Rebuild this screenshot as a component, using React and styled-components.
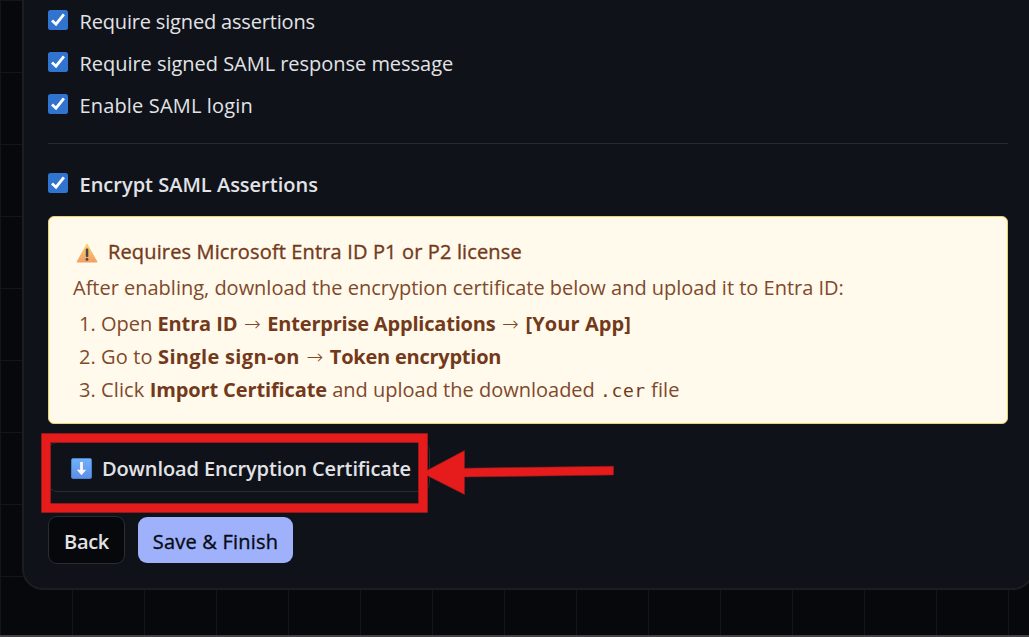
import { styled, createGlobalStyle } from "styled-components";

const options = [
  { label: "Require signed assertions", tracking: -0.17 },
  { label: "Require signed SAML response message", tracking: -0.03 },
  { label: "Enable SAML login", tracking: 0.16 },
];

export default function App() {
  return (
    <>
      <GlobalStyle />
      <PageStyled>
        <PanelStyled>
          <OptionList>
            {options.map(({ label, tracking }) => (
              <CheckboxRow key={label} label={label} tracking={tracking} />
            ))}
          </OptionList>
          <Divider />
          <CheckboxRow label="Encrypt SAML Assertions" tracking={0} isBold />
          <LicenseNotice />
          <DownloadRow>
            <DownloadButton>
              <DownloadIcon />
              <Run $tracking={-0.1}>Download Encryption Certificate</Run>
            </DownloadButton>
            <Highlight />
          </DownloadRow>
          <Actions>
            <BackButton>
              <Run $tracking={-0.3}>Back</Run>
            </BackButton>
            <SaveButton>
              <Run $tracking={0.2}>Save &amp; Finish</Run>
            </SaveButton>
          </Actions>
        </PanelStyled>
      </PageStyled>
    </>
  );
}

function CheckboxRow({ label, tracking, isBold }) {
  return (
    <CheckboxRowStyled $isBold={isBold}>
      <span className="box">
        <svg width="20" height="20" viewBox="0 0 20 20">
          <path d="M4 10.4 L8 14.2 L15.9 4.4" fill="none" stroke="#fff" strokeWidth="2.8" />
        </svg>
      </span>
      <Run $tracking={tracking}>{label}</Run>
    </CheckboxRowStyled>
  );
}

function LicenseNotice() {
  return (
    <NoticeStyled>
      <div className="title">
        <WarningIcon />
        <Run $tracking={0.14}>Requires Microsoft Entra ID P1 or P2 license</Run>
      </div>
      <p>
        <Run $tracking={-0.01}>
          After enabling, download the encryption certificate below and upload it to Entra ID:
        </Run>
      </p>
      <ol>
        <li>
          <Run $tracking={0}>Open </Run>
          <Strong $tracking={-0.12}>Entra ID</Strong>
          <Arrow>→</Arrow>
          <Strong $tracking={-0.2}>Enterprise Applications</Strong>
          <Arrow>→</Arrow>
          <Strong $tracking={0.1}>[Your App]</Strong>
        </li>
        <li>
          <Run $tracking={0.16}>Go to </Run>
          <Strong $tracking={0.33}>Single sign-on</Strong>
          <Arrow>→</Arrow>
          <Strong $tracking={-0.24}>Token encryption</Strong>
        </li>
        <li>
          <Run $tracking={0.12}>Click </Run>
          <Strong $tracking={-0.12}>Import Certificate</Strong>
          <Run $tracking={0}> and upload the downloaded </Run>
          <code>.cer</code>
          <Run $tracking={0.1}> file</Run>
        </li>
      </ol>
    </NoticeStyled>
  );
}

function WarningIcon() {
  return (
    <svg width="22" height="20" viewBox="0 0 22 20">
      <defs>
        <linearGradient id="warning" x1="0" y1="0" x2="0" y2="1">
          <stop offset="0" stopColor="#fad36b" />
          <stop offset="1" stopColor="#f2a065" />
        </linearGradient>
      </defs>
      <path d="M11 1 L21 19 H1 Z" fill="url(#warning)" stroke="url(#warning)" strokeLinejoin="round" />
      <rect x="9.8" y="5.5" width="2.5" height="8.6" rx="1" fill="#4a4550" />
      <circle cx="11" cy="16.4" r="1.4" fill="#4a4550" />
    </svg>
  );
}

function DownloadIcon() {
  return (
    <svg width="21" height="21" viewBox="0 0 21 21">
      <defs>
        <linearGradient id="download" x1="0" y1="0" x2="0" y2="1">
          <stop offset="0" stopColor="#72b2f7" />
          <stop offset="1" stopColor="#5c8ee6" />
        </linearGradient>
      </defs>
      <rect x="0.5" y="0.5" width="20" height="20" rx="1.5" fill="url(#download)" stroke="#4a80d4" />
      <path d="M9.1 4 h2.8 v7.8 h3.3 L10.5 17.2 L5.8 11.8 H9.1 Z" fill="#faf5ff" />
    </svg>
  );
}

function Highlight() {
  return (
    <HighlightStyled width="576" height="80" viewBox="0 0 576 80">
      <g fill="none">
        <rect x="5" y="5" width="377" height="70" stroke="#8c191d" strokeWidth="9.6" />
        <rect x="5" y="5" width="377" height="70" stroke="#e61c1c" strokeWidth="8.6" />
      </g>
      <path
        d="M383 39 L423.5 17.5 V35.2 L572.5 33.2 V42 L423.5 44 V61.5 L383 41 Z"
        fill="#e61c1c"
        stroke="#8c191d"
        strokeWidth="0.6"
      />
      <rect x="378" y="36" width="8" height="10" fill="#e61c1c" />
    </HighlightStyled>
  );
}

const GlobalStyle = createGlobalStyle`
  * {
    box-sizing: border-box;
  }

  body {
    margin: 0;
    overflow: hidden;
    background: #07080b;
    font-family: "Open Sans", "Noto Sans", sans-serif;
    font-size: 20px;
  }
`;

const PageStyled = styled.div`
  width: 1029px;
  height: 637px;
  overflow: hidden;
  padding-left: 22px;
  border-bottom: 2px solid #434345;
  background-color: #07080b;
  background-image: linear-gradient(to right, #14151a 1px, transparent 1px),
    linear-gradient(to bottom, #14151a 1px, transparent 1px);
  background-size: 72px 72px;
`;

const PanelStyled = styled.main`
  width: 1012px;
  height: 590px;
  padding: 0 24px;
  border: 2px solid #1b1d21;
  border-top: none;
  border-radius: 0 0 21px 21px;
  background: #0f1219;
  color: #e2e3e6;
`;

const OptionList = styled.div`
  display: flex;
  flex-direction: column;
  gap: 12px;
  padding-top: 5px;
`;

const CheckboxRowStyled = styled.label`
  display: flex;
  gap: 11.5px;
  height: 30px;
  line-height: 34px;
  font-weight: ${({ $isBold }) => ($isBold ? 600 : 400)};

  .box {
    width: 20px;
    height: 20px;
    margin-top: 5px;
    border-radius: 2.5px;
    background: #3174d0;
  }

  svg {
    display: block;
  }
`;

const Divider = styled.hr`
  height: 1px;
  margin: 24px 0;
  border: none;
  background: #272a30;
`;

const Run = styled.span`
  letter-spacing: ${({ $tracking }) => $tracking}px;
  white-space: pre;
`;

const Strong = styled(Run).attrs({ as: "strong" })`
  font-weight: 700;
`;

const NoticeStyled = styled.section`
  height: 208px;
  margin-top: 18px;
  padding: 17px 24px;
  border: 1px solid #f0d264;
  border-radius: 6px;
  background: #fffaeb;
  color: #7f492c;

  .title {
    display: flex;
    align-items: center;
    gap: 10px;
    height: 34px;
    padding-left: 3px;
    color: #73391b;
    -webkit-text-stroke: 0.35px #73391b;
  }

  .title svg {
    margin-top: 3px;
  }

  p {
    height: 39px;
    margin: 0;
    line-height: 40px;
  }

  ol {
    margin: 0;
    padding-left: 28px;
  }

  li {
    height: 33px;
    line-height: 33px;
    white-space: nowrap;
  }

  strong,
  code {
    color: #73391b;
  }

  code {
    font-family: "DejaVu Sans Mono", monospace;
    font-size: 18px;
    letter-spacing: 0.6px;
  }
`;

const Arrow = styled.span`
  display: inline-block;
  width: 30px;
  line-height: 20px;
  text-align: center;
  font-family: "DejaVu Sans", sans-serif;
  font-weight: 200;
  font-size: 20px;
`;

const DownloadRow = styled.div`
  position: relative;
  margin-top: 18px;
`;

const ButtonStyled = styled.button`
  display: flex;
  align-items: center;
  justify-content: center;
  height: 48px;
  padding: 0;
  border: 1px solid #292c33;
  border-radius: 9px;
  background: transparent;
  color: #e2e3e6;
  font: 600 20px "Open Sans", "Noto Sans", sans-serif;
`;

const DownloadButton = styled(ButtonStyled)`
  gap: 10px;
  width: 382px;
  height: 50px;
  padding: 2px 0 0 4px;
`;

// annotation frame and arrow drawn on top of the download button
const HighlightStyled = styled.svg`
  position: absolute;
  left: -7px;
  top: -9px;
`;

const Actions = styled.div`
  display: flex;
  align-items: center;
  gap: 13px;
  margin-top: 24px;
`;

const BackButton = styled(ButtonStyled)`
  width: 77px;
  padding-top: 2px;
  background: #07080b;
`;

const SaveButton = styled(ButtonStyled)`
  width: 155px;
  height: 46px;
  padding-top: 3px;
  border: none;
  background: #9fb1fb;
  color: #080b14;
  font-weight: 400;
  -webkit-text-stroke: 0.35px #080b14;
`;
